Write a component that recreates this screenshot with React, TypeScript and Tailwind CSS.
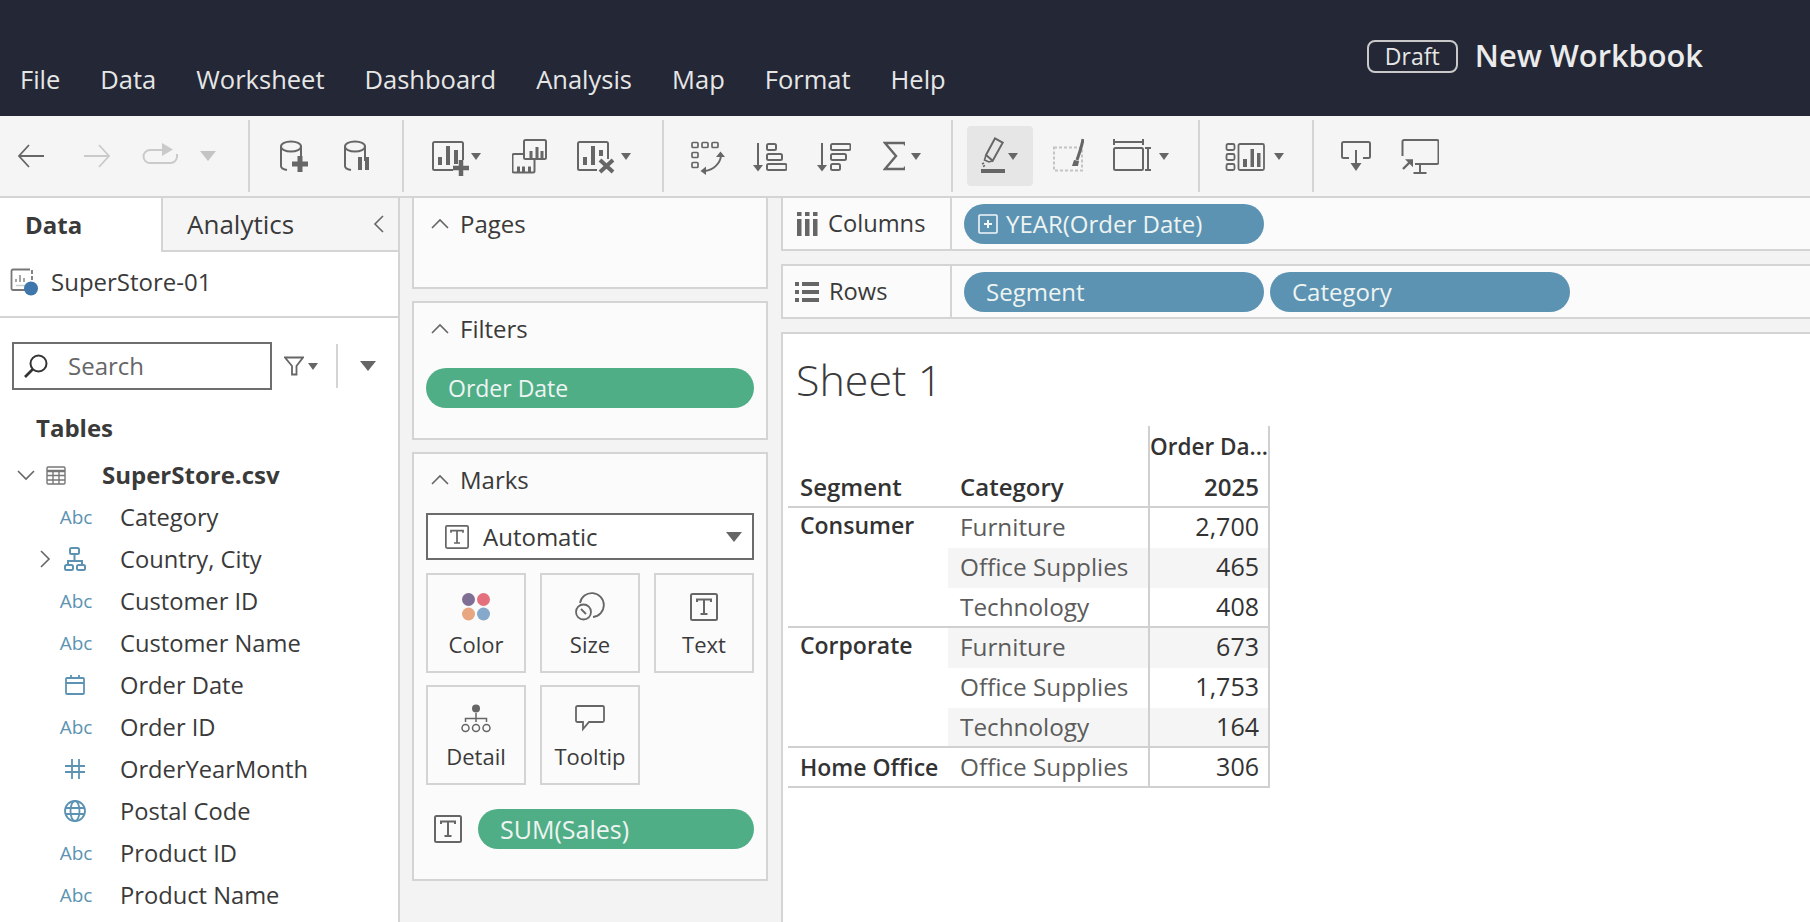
import React from 'react';

const Caret = ({ w = 10, h = 7, color = '#666666', className = '' }: { w?: number; h?: number; color?: string; className?: string }) => (
  <svg width={w} height={h} viewBox="0 0 10 9" preserveAspectRatio="none" className={className}>
    <path d="M0 0H10L5 9Z" fill={color} />
  </svg>
);

const Sep = ({ className = '' }: { className?: string }) => <div className={`w-[2px] h-[72px] bg-[#d4d4d4] ${className}`} />;

const Chevron = ({ dir, className = '' }: { dir: 'up' | 'down' | 'left' | 'right'; className?: string }) => {
  const d = {
    up: 'M1 10L9 2L17 10',
    down: 'M1 2L9 10L17 2',
    left: 'M11 1L3 9L11 17',
    right: 'M3 1L11 9L3 17',
  }[dir];
  const horizontal = dir === 'left' || dir === 'right';
  return (
    <svg width={horizontal ? 14 : 18} height={horizontal ? 18 : 12} className={className} fill="none" stroke="#666666" strokeWidth="1.6">
      <path d={d} />
    </svg>
  );
};

const TIcon = ({ size = 24 }: { size?: number }) => (
  <svg width={size} height={size} viewBox="0 0 28 28" fill="none">
    <rect x="1" y="1" width="26" height="26" rx="1.5" stroke="#666666" strokeWidth="2" />
    <path d="M7 9V6.5H21V9M14 6.5V21M10.5 21H17.5" stroke="#666666" strokeWidth="2" />
  </svg>
);

// toolbar icons: all 40px tall so they sit on the same line as the reference
const Tool = ({ w, children, className = '' }: { w: number; children: React.ReactNode; className?: string }) => (
  <svg width={w} height="40" fill="none" stroke="#666666" strokeWidth="2" className={className}>
    {children}
  </svg>
);

const Cylinder = () => (
  <>
    <ellipse cx="11" cy="10.500" rx="10" ry="5" />
    <path d="M1 10V30Q1 33 7 34M21 10V25" />
  </>
);

const DuplicateBars = () => (
  <g fill="#666666" stroke="none">
    <rect x="17.500" y="15" width="3" height="7" />
    <rect x="23.500" y="11" width="3" height="11" />
    <rect x="28.500" y="15" width="3" height="7" />
    <rect x="5" y="30.500" width="3" height="6" />
    <rect x="10" y="30.500" width="3" height="6" />
    <rect x="16" y="30.500" width="3" height="6" />
  </g>
);

const SheetBars = ({ third = 14 }: { third?: number }) => (
  <g fill="#666666" stroke="none">
    <rect x="6" y="21" width="4" height="8" />
    <rect x="14" y="10" width="4" height="19" />
    <rect x="22" y="14" width={4} height={third} />
  </g>
);

const SourceIcon = () => (
  <svg width="28" height="28" fill="none">
    <path d="M16 22H3A1.500 1.500 0 0 1 1.500 20.500V3A1.500 1.500 0 0 1 3 1.500H20" stroke="#777777" strokeWidth="1.800" />
    <path d="M22 2V6M22 8V12" stroke="#777777" strokeWidth="1.800" />
    <path d="M6 14V11M10 14V7M14 14V10" stroke="#888888" strokeWidth="1.500" />
    <path d="M6 17.500H15" stroke="#cccccc" strokeWidth="1.500" />
    <circle cx="21" cy="20.500" r="7" fill="#3f77ad" />
  </svg>
);

const SearchIcon = () => (
  <svg width="24" height="24" fill="none" stroke="#333333" strokeWidth="2">
    <circle cx="14.500" cy="9.500" r="8" />
    <path d="M9 15L1 23" strokeWidth="2.600" />
  </svg>
);

const FilterIcon = () => (
  <svg width="20" height="20" fill="none" stroke="#666666" strokeWidth="1.800">
    <path d="M1 1.500H19L12.500 10V18.500H8V10Z" />
  </svg>
);

const TableIcon = () => (
  <svg width="20" height="19" fill="none" stroke="#777777" strokeWidth="1.400">
    <rect x="1" y="1" width="18" height="17" rx="1" />
    <path d="M1 5H19" strokeWidth="2.500" />
    <path d="M1 9.500H19M1 14H19M7 5V18M13 5V18" />
  </svg>
);

const HierarchyIcon = () => (
  <svg width="22" height="24" fill="none" stroke="#5c93b2" strokeWidth="2">
    <rect x="6" y="1" width="9" height="6" rx="1.500" />
    <path d="M10.500 7V14M4 18V14H18V18" />
    <rect x="1" y="18" width="8" height="5" rx="1.500" />
    <rect x="13" y="18" width="8" height="5" rx="1.500" />
  </svg>
);

const CalendarIcon = () => (
  <svg width="20" height="20" fill="none" stroke="#5c93b2" strokeWidth="1.800">
    <rect x="1" y="3" width="18" height="16" rx="1" />
    <path d="M1 8H19M6 0V4M14 0V4" />
  </svg>
);

const HashIcon = () => (
  <svg width="20" height="20" fill="none" stroke="#5c93b2" strokeWidth="1.800">
    <path d="M7 0V20M14 0V20M0 7H20M0 13H20" />
  </svg>
);

const GlobeIcon = () => (
  <svg width="22" height="22" fill="none" stroke="#5c93b2" strokeWidth="1.800">
    <circle cx="11" cy="11" r="10" />
    <ellipse cx="11" cy="11" rx="4.500" ry="10" />
    <path d="M1.500 8H20.500M1.500 14H20.500" />
  </svg>
);

const ColorIcon = () => (
  <svg width="30" height="30">
    <circle cx="7.500" cy="7.500" r="6.500" fill="#7f6f95" />
    <circle cx="22.500" cy="7.500" r="6.500" fill="#e4707d" />
    <circle cx="7.500" cy="22" r="6.500" fill="#e8a781" />
    <circle cx="22.500" cy="22" r="6.500" fill="#86a8cb" />
  </svg>
);

const SizeIcon = () => (
  <svg width="30" height="30" fill="none" stroke="#666666" strokeWidth="1.800">
    <path d="M5 11A12 12 0 1 1 18 25" />
    <circle cx="8.500" cy="20" r="7.500" />
    <path d="M6 17L11 22" />
  </svg>
);

const DetailIcon = () => (
  <svg width="30" height="30" fill="none" stroke="#666666" strokeWidth="1.500">
    <circle cx="15" cy="4.500" r="4" fill="#666666" stroke="none" />
    <path d="M15 9V18M4.500 18V14.500H25.500V18" />
    <circle cx="4.500" cy="24" r="3.500" />
    <circle cx="15" cy="24" r="3.500" />
    <circle cx="25.500" cy="24" r="3.500" />
  </svg>
);

const TooltipIcon = () => (
  <svg width="30" height="28" fill="none" stroke="#666666" strokeWidth="1.800">
    <path d="M2.500 1H27.500A1.500 1.500 0 0 1 29 2.500V15.500A1.500 1.500 0 0 1 27.500 17H14L8 24V17H2.500A1.500 1.500 0 0 1 1 15.500V2.500A1.500 1.500 0 0 1 2.500 1Z" />
  </svg>
);

const ColumnsIcon = () => (
  <svg width="21" height="24" fill="#666666">
    <rect x="0" y="0" width="4.500" height="4" />
    <rect x="8" y="0" width="4.500" height="4" />
    <rect x="16" y="0" width="4.500" height="4" />
    <rect x="0" y="7" width="4.500" height="17" />
    <rect x="8" y="7" width="4.500" height="17" />
    <rect x="16" y="7" width="4.500" height="17" />
  </svg>
);

const RowsIcon = () => (
  <svg width="24" height="20" fill="#666666">
    <rect x="0" y="0" width="4" height="4" />
    <rect x="0" y="8" width="4" height="4" />
    <rect x="0" y="16" width="4" height="4" />
    <rect x="7" y="0" width="17" height="4" />
    <rect x="7" y="8" width="17" height="4" />
    <rect x="7" y="16" width="17" height="4" />
  </svg>
);

const PlusBoxIcon = () => (
  <svg width="20" height="20" fill="none" stroke="#f2f6f9" strokeWidth="1.600">
    <rect x="1" y="1" width="18" height="18" rx="1" />
    <path d="M6 10H14M10 6V14" strokeWidth="2" />
  </svg>
);

const fields: { name: string; icon: React.ReactNode; expand?: boolean }[] = [
  { name: 'Category', icon: 'Abc' },
  { name: 'Country, City', icon: <HierarchyIcon />, expand: true },
  { name: 'Customer ID', icon: 'Abc' },
  { name: 'Customer Name', icon: 'Abc' },
  { name: 'Order Date', icon: <CalendarIcon /> },
  { name: 'Order ID', icon: 'Abc' },
  { name: 'OrderYearMonth', icon: <HashIcon /> },
  { name: 'Postal Code', icon: <GlobeIcon /> },
  { name: 'Product ID', icon: 'Abc' },
  { name: 'Product Name', icon: 'Abc' },
];

const marks = [
  { label: 'Color', icon: <ColorIcon /> },
  { label: 'Size', icon: <SizeIcon /> },
  { label: 'Text', icon: <TIcon size={28} /> },
  { label: 'Detail', icon: <DetailIcon /> },
  { label: 'Tooltip', icon: <TooltipIcon /> },
];

const rows = [
  { segment: 'Consumer', category: 'Furniture', value: '2,700', alt: false, last: false },
  { segment: '', category: 'Office Supplies', value: '465', alt: true, last: false },
  { segment: '', category: 'Technology', value: '408', alt: false, last: true },
  { segment: 'Corporate', category: 'Furniture', value: '673', alt: true, last: false },
  { segment: '', category: 'Office Supplies', value: '1,753', alt: false, last: false },
  { segment: '', category: 'Technology', value: '164', alt: true, last: true },
  { segment: 'Home Office', category: 'Office Supplies', value: '306', alt: false, last: true },
];

const Pill = ({ color, className = '', children }: { color: string; className?: string; children: React.ReactNode }) => (
  <div className={`h-10 rounded-[20px] flex items-center text-[#eef4f2] ${color} ${className}`}>{children}</div>
);

function Header() {
  const menu = ['File', 'Data', 'Worksheet', 'Dashboard', 'Analysis', 'Map', 'Format', 'Help'];
  return (
    <div className="h-[116px] bg-[#232736] flex justify-between shrink-0">
      <div className="flex items-end gap-[40px] pl-5 pb-[20px] text-[25.500px] leading-[34px] text-[#e6e6e6]">
        {menu.map((m) => (
          <span key={m}>{m}</span>
        ))}
      </div>
      <div className="flex items-start pt-10 pr-[107px]">
        <div className="w-[91px] h-[33px] rounded-lg border-2 border-[#c9c9c9] flex items-center justify-center text-[23px] text-[#e6e6e6]">Draft</div>
        <div className="ml-[17px] -mt-[3px] text-[30.800px] leading-[36px] font-semibold text-[#ebebeb]">New Workbook</div>
      </div>
    </div>
  );
}

function Toolbar() {
  return (
    <div className="h-[82px] border-b-2 border-[#d4d4d4] bg-[#f5f5f5] flex items-center shrink-0">
      <Tool w={27} className="ml-[17px]"><path d="M12 9L2 20L12 31M2 20H27" strokeWidth="1.800" /></Tool>
      <Tool w={27} className="ml-[40px]"><path d="M15 9L25 20L15 31M25 20H0" stroke="#cacaca" strokeWidth="1.800" /></Tool>
      <Tool w={36} className="ml-[31px]">
        <path d="M24 14H8A6.500 6.500 0 0 0 8 27H28A6.500 6.500 0 0 0 35 20.500V18" stroke="#cacaca" />
        <path d="M20 7L31 13.500L20 20Z" fill="#cacaca" stroke="none" />
      </Tool>
      <Caret w={16} h={10} color="#c4c4c4" className="ml-[22px]" />
      <Sep className="ml-[32px]" />
      <Tool w={28} className="ml-[30px]">
        <Cylinder />
        <path d="M12 28H28M20 20V36" strokeWidth="5" />
      </Tool>
      <Tool w={25} className="ml-[36px]">
        <Cylinder />
        <path d="M16 21V34M23 21V34" strokeWidth="4" />
      </Tool>
      <Sep className="ml-[33px]" />
      <Tool w={37} className="ml-[28px]">
        <path d="M21 34H2.500A1.500 1.500 0 0 1 1 32.500V7.500A1.500 1.500 0 0 1 2.500 6H29.500A1.500 1.500 0 0 1 31 7.500V24" />
        <SheetBars />
        <path d="M21 32H37M29 24V40" strokeWidth="4.500" />
      </Tool>
      <Caret className="ml-[2px]" />
      <Tool w={35} className="ml-[31px]">
        <rect x="12" y="4" width="22" height="19" rx="1.500" />
        <path d="M11 18H2A1.500 1.500 0 0 0 0.500 19.500V35A1.500 1.500 0 0 0 2 36.500H21A1.500 1.500 0 0 0 22.500 35V24" />
        <DuplicateBars />
      </Tool>
      <Tool w={38} className="ml-[30px]">
        <path d="M20 34H2.500A1.500 1.500 0 0 1 1 32.500V7.500A1.500 1.500 0 0 1 2.500 6H29.500A1.500 1.500 0 0 1 31 7.500V23" />
        <SheetBars third={6} />
        <path d="M23 24L36 36M36 24L23 36" strokeWidth="4" />
      </Tool>
      <Caret className="ml-[6px]" />
      <Sep className="ml-[31px]" />
      <Tool w={34} className="ml-[27px]">
        <g strokeWidth="1.700">
          <rect x="1" y="6.500" width="6" height="5" rx="1" />
          <rect x="11" y="6.500" width="6" height="5" rx="1" />
          <rect x="21" y="6.500" width="6" height="5" rx="1" />
          <rect x="1" y="16.500" width="6" height="5" rx="1" />
          <rect x="1" y="26.500" width="6" height="5" rx="1" />
        </g>
        <path d="M30 20C29 28 22 34 14 35" />
        <path d="M25 21L29.500 15.500L34 21ZM15 30.500V39L9.500 35Z" fill="#666666" stroke="none" />
      </Tool>
      <Tool w={34} className="ml-[28px]">
        <path d="M5 7V30" />
        <path d="M0 29H10L5 35.500Z" fill="#666666" stroke="none" />
        <rect x="14" y="8" width="9" height="6" rx="1.500" />
        <rect x="14" y="18" width="15" height="6" rx="1.500" />
        <rect x="14" y="28" width="19.500" height="6" rx="1.500" />
      </Tool>
      <Tool w={34} className="ml-[30px]">
        <path d="M5 7V30" />
        <path d="M0 29H10L5 35.500Z" fill="#666666" stroke="none" />
        <rect x="14" y="8" width="19.500" height="6" rx="1.500" />
        <rect x="14" y="18" width="15" height="6" rx="1.500" />
        <rect x="14" y="28" width="9" height="6" rx="1.500" />
      </Tool>
      <Tool w={22} className="ml-[32px]">
        <path d="M22 9.500V7H2L13 20L2 33H22V30.500" strokeWidth="2.400" />
      </Tool>
      <Caret className="ml-[6px]" />
      <Sep className="ml-[30px]" />
      <div className="ml-[14px] w-[66px] h-[60px] rounded-sm bg-[#e6e6e6] flex items-center pl-[14px]">
        <Tool w={24}>
          <path d="M14 2.300L21.700 6.700L11.700 24.700L5 19Z" />
          <path d="M5 19L3.500 24L8 26L11.700 24.700" strokeWidth="1.600" />
          <path d="M1 28L3 27M2 30.500L4 29.500" strokeWidth="1.400" />
          <rect x="0" y="33" width="24" height="4" fill="#666666" stroke="none" />
        </Tool>
        <Caret className="ml-[3px]" />
      </div>
      <Tool w={31} className="ml-5">
        <rect x="1" y="11.500" width="28" height="23" stroke="#c4c4c4" strokeDasharray="3 2" />
        <path d="M30 3C29 10 26 18 24 24" strokeWidth="3" />
        <path d="M21 24L26 25L25 30H19Z" fill="#666666" stroke="none" />
      </Tool>
      <Tool w={38} className="ml-[29px]">
        <path d="M1 3V9M30 3V9M1 6H30" />
        <rect x="1" y="12" width="29" height="22" rx="1.500" />
        <path d="M35 12V34M32 12H38M32 34H38" />
      </Tool>
      <Caret className="ml-2" />
      <Sep className="ml-[29px]" />
      <Tool w={40} className="ml-[25px]">
        <g strokeWidth="1.800">
          <rect x="1.500" y="8" width="8" height="6" rx="1.500" />
          <rect x="1.500" y="18" width="8" height="6" rx="1.500" />
          <rect x="1.500" y="28" width="8" height="6" rx="1.500" />
          <rect x="13.500" y="8" width="25.500" height="26" rx="1.500" />
        </g>
        <g fill="#666666" stroke="none">
          <rect x="18" y="23" width="4" height="8" />
          <rect x="25.500" y="13" width="3.500" height="18" />
          <rect x="32" y="17" width="3.500" height="14" />
        </g>
      </Tool>
      <Caret className="ml-[9px]" />
      <Sep className="ml-[28px]" />
      <Tool w={30} className="ml-[27px]">
        <path d="M8 22H2.500A1.500 1.500 0 0 1 1 20.500V7.500A1.500 1.500 0 0 1 2.500 6H27.500A1.500 1.500 0 0 1 29 7.500V20.500A1.500 1.500 0 0 1 27.500 22H22" />
        <path d="M15 14V30" />
        <path d="M9.500 27H20.500L15 35Z" fill="#666666" stroke="none" />
      </Tool>
      <Tool w={38} className="ml-[30px]">
        <path d="M1.500 20V5.500A1.500 1.500 0 0 1 3 4H36A1.500 1.500 0 0 1 37.500 5.500V26.500A1.500 1.500 0 0 1 36 28H14" />
        <path d="M19 28V37M12.500 37H25.500" />
        <path d="M4 23.300H12V31.300Z" fill="#666666" stroke="none" />
        <path d="M2 33L9 26" strokeWidth="2.400" />
      </Tool>
    </div>
  );
}

function DataPane() {
  return (
    <div className="w-[400px] shrink-0 border-r-2 border-[#d4d4d4] bg-white text-[#3a3a3a]">
      <div className="flex h-[54px]">
        <div className="w-[161px] pl-[25px] flex items-center text-[24px] font-bold">Data</div>
        <div className="flex-1 bg-[#f5f5f5] border-l-2 border-b-2 border-[#d4d4d4] flex items-center justify-between pl-6 pr-3 text-[26px]">
          <span>Analytics</span>
          <Chevron dir="left" />
        </div>
      </div>
      <div className="h-[66px] border-b-2 border-[#d4d4d4] flex items-center pl-[10px] pb-[5px] text-[24px]">
        <SourceIcon />
        <span className="ml-[13px]">SuperStore-01</span>
      </div>
      <div className="flex items-center mt-6 ml-3 h-12">
        <div className="w-[260px] h-12 border-2 border-[#6e6e6e] flex items-center pl-[10px] text-[24px] text-[#666666]">
          <SearchIcon />
          <span className="ml-5">Search</span>
        </div>
        <span className="ml-3"><FilterIcon /></span>
        <Caret className="ml-[4px]" />
        <div className="ml-[18px] w-[2px] h-11 bg-[#d4d4d4]" />
        <Caret w={16} h={10} className="ml-[22px]" />
      </div>
      <div className="h-9 mt-5 pl-9 flex items-center text-[24px] font-bold">Tables</div>
      <div className="h-[42px] mt-2 flex items-center">
        <Chevron dir="down" className="ml-[17px]" />
        <span className="ml-[11px]"><TableIcon /></span>
        <span className="ml-9 text-[24px] font-bold">SuperStore.csv</span>
      </div>
      {fields.map((f) => (
        <div key={f.name} className="h-[42px] flex items-center">
          <div className="w-[60px] flex justify-end pr-2">{f.expand && <Chevron dir="right" />}</div>
          <div className={`w-[36px] flex justify-center text-[19px] text-[#5c93b2] ${typeof f.icon === 'string' ? 'pr-1' : 'pr-[7px]'}`}>{f.icon}</div>
          <span className="ml-6 pt-[2px] text-[23.700px]">{f.name}</span>
        </div>
      ))}
    </div>
  );
}

function ShelfCard({ title, className = '', children }: { title: string; className?: string; children?: React.ReactNode }) {
  return (
    <div className={`border-2 border-[#d4d4d4] bg-[#fbfbfb] ${className}`}>
      <div className="flex items-center pl-[17px] h-[52px] text-[24px]">
        <Chevron dir="up" />
        <span className="ml-[11px]">{title}</span>
      </div>
      {children}
    </div>
  );
}

function CardsPane() {
  return (
    <div className="w-[381px] shrink-0 bg-[#f3f3f3] pl-3 pr-[13px] text-[#3a3a3a]">
      <ShelfCard title="Pages" className="h-[91px] border-t-0" />
      <ShelfCard title="Filters" className="h-[139px] mt-3">
        <div className="px-3 pt-[13px]">
          <Pill color="bg-[#50ae87]" className="pl-[22px] text-[23px]">Order Date</Pill>
        </div>
      </ShelfCard>
      <ShelfCard title="Marks" className="h-[429px] mt-3">
        <div className="px-3 pt-[7px]">
          <div className="h-[47px] border-2 border-[#6b6b6b] bg-white flex items-center pl-[17px] pr-[4px] text-[24px]">
            <TIcon size={24} />
            <span className="ml-[14px] flex-1">Automatic</span>
            <Caret w={16} h={10} className="mr-[6px]" />
          </div>
          <div className="grid grid-cols-3 gap-x-[14px] gap-y-3 mt-[13px]">
            {marks.map((m) => (
              <div key={m.label} className="h-[100px] border-2 border-[#d4d4d4] flex flex-col items-center">
                <div className="h-[30px] mt-[17px] flex items-center">{m.icon}</div>
                <span className="mt-[5px] text-[22px] leading-[34px]">{m.label}</span>
              </div>
            ))}
          </div>
          <div className="flex items-center mt-6">
            <span className="ml-2"><TIcon size={28} /></span>
            <Pill color="bg-[#50ae87]" className="flex-1 ml-4 pl-[22px] pt-[2px] text-[25px]">SUM(Sales)</Pill>
          </div>
        </div>
      </ShelfCard>
    </div>
  );
}

function SheetTable() {
  return (
    <div className="ml-[5px] w-[482px] text-[23px] text-[#333333]">
      <div className="flex h-[42px]">
        <div className="w-[360px]" />
        <div className="w-[122px] border-x-2 border-[#d0d0d0] flex items-center text-[22.500px] font-semibold whitespace-nowrap">Order Da...</div>
      </div>
      <div className="flex h-[40px] border-b-2 border-[#d0d0d0] font-semibold text-[24px]">
        <div className="w-[160px] pl-3 flex items-center">Segment</div>
        <div className="w-[200px] pl-3 flex items-center">Category</div>
        <div className="w-[122px] border-x-2 border-[#d0d0d0] flex items-center justify-end pr-[9px]">2025</div>
      </div>
      {rows.map((r, i) => (
        <div key={i} className={`flex h-[40px] ${r.last ? 'border-b-2 border-[#d0d0d0]' : ''}`}>
          <div className={`w-[160px] pl-3 font-semibold whitespace-nowrap flex items-center ${r.last ? '' : 'pb-[5px]'}`}>{r.segment}</div>
          <div className={`w-[200px] pl-3 flex items-center text-[24.300px] text-[#5c5c5c] ${r.last ? '' : 'pb-[2px]'} ${r.alt ? 'bg-[#f5f5f5]' : ''}`}>{r.category}</div>
          <div className={`w-[122px] border-x-2 border-[#d0d0d0] flex items-center justify-end pr-[9px] text-[25px] ${r.last ? '' : 'pb-[2px]'} ${r.alt ? 'bg-[#f5f5f5]' : ''}`}>{r.value}</div>
        </div>
      ))}
    </div>
  );
}

function SheetPane() {
  return (
    <div className="flex-1 min-w-0 bg-[#f3f3f3] flex flex-col text-[#3a3a3a] overflow-hidden">
      <div className="h-[53px] border-l-2 border-b-2 border-[#d4d4d4] bg-[#fbfbfb] flex shrink-0">
        <div className="w-[169px] h-full border-r-2 border-[#d4d4d4] flex items-center pl-[14px] text-[23.700px] shrink-0">
          <ColumnsIcon />
          <span className="ml-[10px]">Columns</span>
        </div>
        <div className="pl-3 pt-[6px]">
          <Pill color="bg-[#5c93b2]" className="w-[300px] pl-[14px] text-[24px]">
            <PlusBoxIcon />
            <span className="ml-2">YEAR(Order Date)</span>
          </Pill>
        </div>
      </div>
      <div className="h-[55px] mt-[13px] border-2 border-r-0 border-[#d4d4d4] bg-[#fbfbfb] flex shrink-0">
        <div className="w-[169px] h-full border-r-2 border-[#d4d4d4] flex items-center pl-3 text-[23.700px] shrink-0">
          <RowsIcon />
          <span className="ml-[10px]">Rows</span>
        </div>
        <div className="pl-3 pt-[6px] flex gap-[6px] text-[24px]">
          <Pill color="bg-[#5c93b2]" className="w-[300px] pl-[22px]">Segment</Pill>
          <Pill color="bg-[#5c93b2]" className="w-[300px] pl-[22px]">Category</Pill>
        </div>
      </div>
      <div className="flex-1 mt-[13px] border-l-2 border-t-2 border-[#d4d4d4] bg-white">
        <div className="h-[92px] pl-[13px] flex items-center text-[43px] font-light">Sheet 1</div>
        <SheetTable />
      </div>
    </div>
  );
}

export default function App() {
  return (
    <div className="w-[1810px] h-[922px] overflow-hidden flex flex-col bg-white [font-family:'Open_Sans',sans-serif]">
      <Header />
      <Toolbar />
      <div className="flex flex-1 min-h-0">
        <DataPane />
        <CardsPane />
        <SheetPane />
      </div>
    </div>
  );
}
